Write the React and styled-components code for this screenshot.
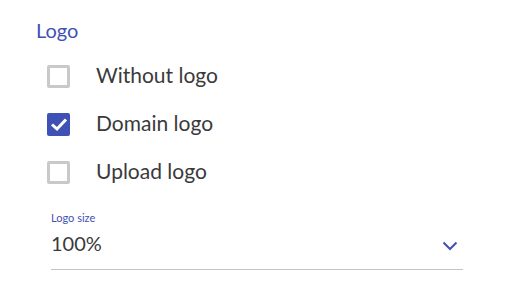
import React, { useState } from "react"
import styled, { createGlobalStyle } from "styled-components"

const GlobalStyle = createGlobalStyle`
	body {
		margin: 0;
		background: #fff;
		font-family: Lato, "Open Sans", sans-serif;
	}
`

const options = [
	{ id: "none", label: "Without logo" },
	{ id: "domain", label: "Domain logo" },
	{ id: "upload", label: "Upload logo" },
]

const Check = () => (
	<svg width="18" height="15" viewBox="0 0 18 15">
		<path d="M2 7.5 L7 12 L16 2.5" fill="none" stroke="#fff" strokeWidth="3" />
	</svg>
)

const Chevron = () => (
	<svg width="16" height="10" viewBox="0 0 16 10">
		<path d="M1.5 1.5 L8 8 L14.5 1.5" fill="none" stroke="#3f51b5" strokeWidth="2" />
	</svg>
)

const App = () => {
	const [selected, setSelected] = useState("domain")
	return (
		<>
		<GlobalStyle />
		<Container>
			<Title>Logo</Title>
			<List>
				{options.map(o => (
					<Option key={o.id} onClick={() => setSelected(o.id)}>
						<Box checked={selected === o.id}>
							{selected === o.id && <Check />}
						</Box>
						<Label>{o.label}</Label>
					</Option>
				))}
			</List>
			<Field>
				<FieldLabel>Logo size</FieldLabel>
				<Select>
					<Value>100%</Value>
					<Chevron />
				</Select>
			</Field>
		</Container>
		</>
	)
}

const Container = styled.div`
	display: flex;
	flex-direction: column;
	padding: 18px 0 0 36px;
`
const Title = styled.div`
	color: #3f51b5;
	font-size: 20px;
	line-height: 24px;
`
const List = styled.div`
	display: flex;
	flex-direction: column;
	gap: 25px;
	margin: 23px 0 0 11px;
`
const Option = styled.div`
	display: flex;
	align-items: center;
	gap: 26px;
	height: 23px;
	cursor: pointer;
`
const Box = styled.div`
	box-sizing: border-box;
	width: 23px;
	height: 23px;
	border-radius: 2px;
	border: ${p => (p.checked ? "none" : "3px solid #c9c9c9")};
	background: ${p => (p.checked ? "#3f51b5" : "#fff")};
	display: flex;
	align-items: center;
	justify-content: center;
`
const Label = styled.div`
	color: #3a3a3a;
	font-size: 21px;
	margin-top: -5px;
`
const Field = styled.div`
	display: flex;
	flex-direction: column;
	width: 412px;
	margin: 27px 0 0 15px;
`
const FieldLabel = styled.div`
	color: #3f51b5;
	font-size: 11px;
	line-height: 14px;
`
const Select = styled.div`
	display: flex;
	align-items: center;
	justify-content: space-between;
	padding: 6px 5px 14px 0;
	border-bottom: 1px solid #c4c4c4;
	svg {
		margin-top: 6px;
	}
`
const Value = styled.div`
	color: #3a3a3a;
	font-size: 20px;
	line-height: 24px;
`

export default App
